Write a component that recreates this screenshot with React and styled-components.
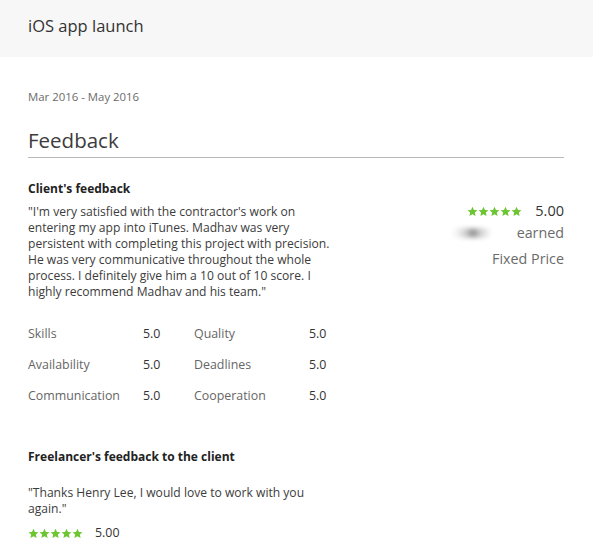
import React from "react";
import styled, { createGlobalStyle } from "styled-components";

const Global = createGlobalStyle`
  html, body { margin: 0; padding: 0; background: #fff; }
  body { font-family: "Open Sans", "Liberation Sans", Arial, sans-serif; color: #222; }
`;

const Page = styled.div`
  width: 593px;
  min-height: 560px;
  background: #fff;
`;

const Header = styled.div`
  height: 57px;
  background: #f7f7f7;
  display: flex;
  align-items: center;
  padding: 0 28px;
  box-sizing: border-box;
`;

const Title = styled.h1`
  margin: 0;
  font-size: 16.5px;
  font-weight: 400;
  color: #333;
  padding-bottom: 6px;
`;

const Body = styled.div`
  padding: 32px 29px 0 28px;
`;

const DateRange = styled.div`
  font-size: 11.4px;
  line-height: 16px;
  color: #6b6b6b;
`;

const SectionTitle = styled.h2`
  margin: 22px 0 0;
  font-size: 20.5px;
  line-height: 26px;
  font-weight: 400;
  color: #3c3c3c;
  padding-bottom: 4px;
  border-bottom: 1px solid #b8b8b8;
`;

const Top = styled.div`
  display: flex;
  justify-content: space-between;
  margin-top: 23px;
`;

const Left = styled.div`
  width: 310px;
`;

const SubTitle = styled.h3`
  margin: 0;
  font-size: 12px;
  line-height: 16px;
  font-weight: 700;
  color: #222;
`;

const Quote = styled.p`
  margin: ${(p) => p.$mt || 6}px 0 0;
  font-size: 12.1px;
  line-height: 16px;
  color: #3c3c3c;
  width: ${(p) => p.$w || 302}px;
`;

const Right = styled.div`
  display: flex;
  flex-direction: column;
  align-items: flex-end;
  padding-top: 21px;
`;

const RatingRow = styled.div`
  display: flex;
  align-items: center;
  gap: ${(p) => p.$gap || 13}px;
  margin-top: ${(p) => p.$mt || 0}px;
`;

const Score = styled.span`
  font-size: ${(p) => p.$size || 14.5}px;
  line-height: 18px;
  color: #333;
`;

const Muted = styled.div`
  font-size: 14.3px;
  line-height: 18px;
  color: #6b6b6b;
  margin-top: ${(p) => p.$mt || 0}px;
  display: flex;
  align-items: center;
  gap: 26px;
`;

const Blur = styled.span`
  display: inline-block;
  width: 40px;
  height: 10px;
  border-radius: 5px;
  background: radial-gradient(circle at 55% 50%, #888 0, #ccc 30%, #f3f3f3 70%, transparent 100%);
  filter: blur(2px);
`;

const Grid = styled.div`
  display: grid;
  grid-template-columns: 115px 51px 115px 30px;
  row-gap: 15px;
  margin-top: 26px;
  font-size: 12.4px;
  line-height: 16px;
`;

const Label = styled.span`
  color: #666;
`;

const Value = styled.span`
  color: #333;
`;

const Freelancer = styled.div`
  margin-top: 45px;
`;

const StarsBox = styled.span`
  display: inline-flex;
`;

const Star = () => (
  <svg width="11" height="11" viewBox="0 0 24 24">
    <path
      fill="#6cc531"
      d="M12 1.5l3.2 7 7.6.8-5.7 5.1 1.6 7.5L12 18l-6.7 3.9 1.6-7.5L1.2 9.3l7.6-.8z"
    />
  </svg>
);

const Stars = () => (
  <StarsBox>
    {[0, 1, 2, 3, 4].map((i) => (
      <Star key={i} />
    ))}
  </StarsBox>
);

const ratings = [
  ["Skills", "5.0", "Quality", "5.0"],
  ["Availability", "5.0", "Deadlines", "5.0"],
  ["Communication", "5.0", "Cooperation", "5.0"],
];

export default function App() {
  return (
    <Page>
      <Global />
      <Header>
        <Title>iOS app launch</Title>
      </Header>
      <Body>
        <DateRange>Mar 2016 - May 2016</DateRange>
        <SectionTitle>Feedback</SectionTitle>
        <Top>
          <Left>
            <SubTitle>Client's feedback</SubTitle>
            <Quote $mt={7}>
              "I'm very satisfied with the contractor's work on entering my app into iTunes. Madhav was very
              persistent with completing this project with precision. He was very communicative throughout the
              whole process. I definitely give him a 10 out of 10 score. I highly recommend Madhav and his team."
            </Quote>
          </Left>
          <Right>
            <RatingRow>
              <Stars />
              <Score>5.00</Score>
            </RatingRow>
            <Muted $mt={4}>
              <Blur />
              earned
            </Muted>
            <Muted $mt={8}>Fixed Price</Muted>
          </Right>
        </Top>
        <Grid>
          {ratings.map((r) => (
            <React.Fragment key={r[0]}>
              <Label>{r[0]}</Label>
              <Value>{r[1]}</Value>
              <Label>{r[2]}</Label>
              <Value>{r[3]}</Value>
            </React.Fragment>
          ))}
        </Grid>
        <Freelancer>
          <SubTitle>Freelancer's feedback to the client</SubTitle>
          <Quote $mt={20} $w={290}>
            "Thanks Henry Lee, I would love to work with you again."
          </Quote>
          <RatingRow $gap={12} $mt={7}>
            <Stars />
            <Score $size={12.4}>5.00</Score>
          </RatingRow>
        </Freelancer>
      </Body>
    </Page>
  );
}
